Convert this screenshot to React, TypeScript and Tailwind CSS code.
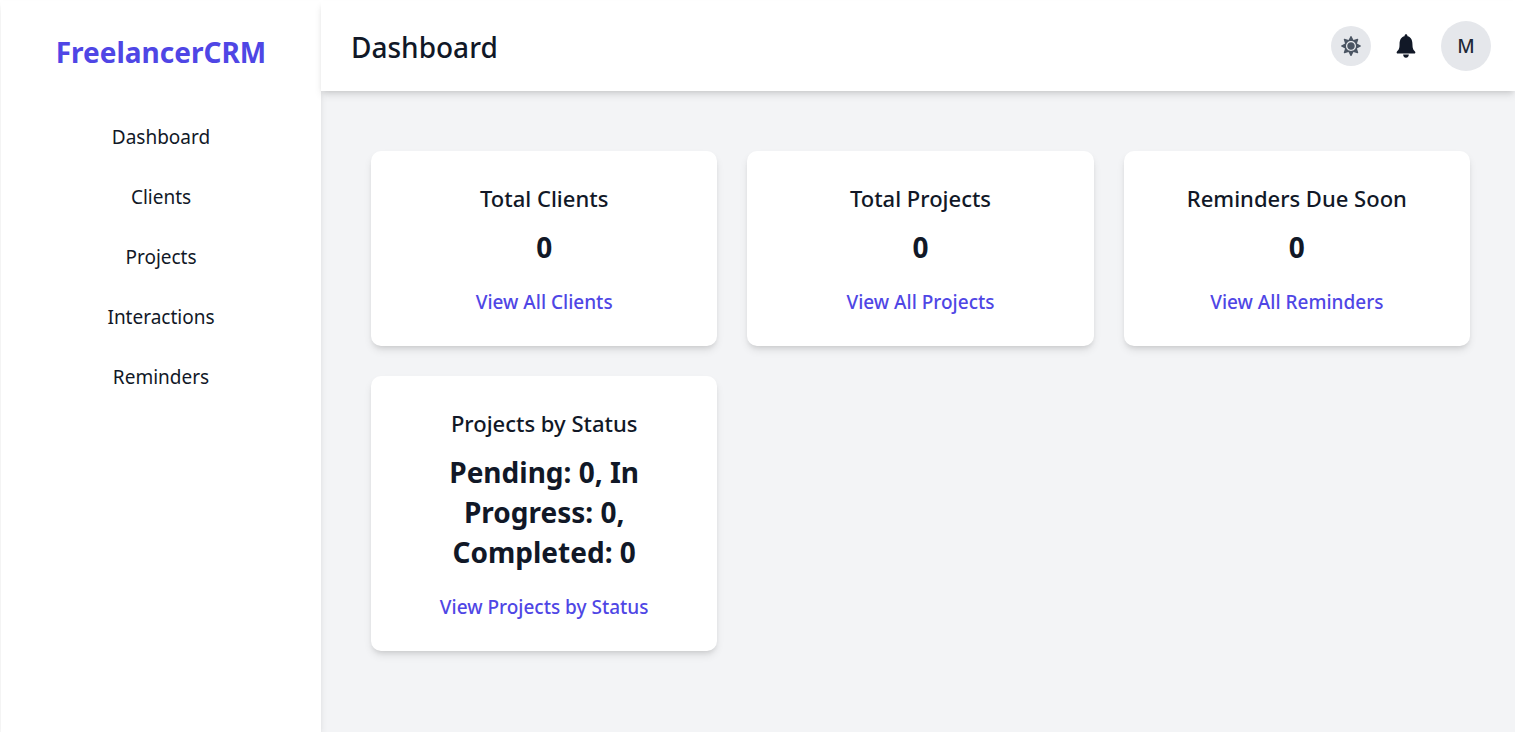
import { FaSun } from "react-icons/fa";
import { IoIosNotifications } from "react-icons/io";

const navItems = ["Dashboard", "Clients", "Projects", "Interactions", "Reminders"];

interface StatCardProps {
  title: string;
  value: string;
  linkText: string;
}

const stats: StatCardProps[] = [
  { title: "Total Clients", value: "0", linkText: "View All Clients" },
  { title: "Total Projects", value: "0", linkText: "View All Projects" },
  { title: "Reminders Due Soon", value: "0", linkText: "View All Reminders" },
  {
    title: "Projects by Status",
    value: "Pending: 0, In Progress: 0, Completed: 0",
    linkText: "View Projects by Status",
  },
];

function Sidebar() {
  return (
    <aside className="z-10 w-80 shrink-0 bg-white text-center shadow-[0_5px_8px_-1px_rgba(0,0,0,0.1),0_3px_5px_-3px_rgba(0,0,0,0.1)]">
      <h1 className="pt-[31px] text-[28px] leading-10 font-bold text-[#4f46e5]">FreelancerCRM</h1>
      <nav className="mt-[50px]">
        <ul className="flex flex-col gap-[30px]">
          {navItems.map((item) => (
            <li key={item}>
              <a href="#" className="block text-[19px] leading-[30px]">
                {item}
              </a>
            </li>
          ))}
        </ul>
      </nav>
    </aside>
  );
}

function Header() {
  return (
    <header className="z-20 flex items-center justify-between bg-white py-5 pr-6 pl-[30px] shadow-[0_5px_8px_-1px_rgba(0,0,0,0.1),0_3px_5px_-2px_rgba(0,0,0,0.1)]">
      <h2 className="pt-0.5 text-[28px] leading-10 font-medium">Dashboard</h2>
      <div className="flex items-center gap-5">
        <button
          type="button"
          aria-label="Toggle theme"
          className="flex size-10 items-center justify-center rounded-full bg-[#e5e7eb] text-[#4b5563]"
        >
          <FaSun size={20} />
        </button>
        <button type="button" aria-label="Notifications">
          <IoIosNotifications size={30} />
        </button>
        <button
          type="button"
          aria-label="Account"
          className="flex size-[50px] items-center justify-center rounded-full bg-[#e5e7eb] text-[19px] font-medium text-[#1f2937]"
        >
          M
        </button>
      </div>
    </header>
  );
}

function StatCard({ title, value, linkText }: StatCardProps) {
  return (
    <section className="rounded-[10px] bg-white px-[30px] pt-[30px] pb-[29px] text-center shadow-[0_5px_8px_-1px_rgba(0,0,0,0.1),0_3px_5px_-2px_rgba(0,0,0,0.1)]">
      <h3 className="text-[22px] leading-[35px] font-medium">{title}</h3>
      <p className="mt-[11px] text-[28px] leading-10 font-bold">{value}</p>
      <a href="#" className="mt-5 block text-[19px] leading-[30px] font-medium text-[#4f46e5]">
        {linkText}
      </a>
    </section>
  );
}

export default function App() {
  return (
    <div className="flex min-h-screen bg-white pt-px pl-px font-['Noto_Sans',sans-serif] text-[#111827]">
      <Sidebar />
      <div className="flex min-w-0 flex-1 flex-col bg-[#f3f4f6]">
        <Header />
        <main className="grid grid-cols-3 items-start gap-[30px] pt-[60px] pr-[45px] pb-[50px] pl-[50px]">
          {stats.map((stat) => (
            <StatCard key={stat.title} {...stat} />
          ))}
        </main>
      </div>
    </div>
  );
}
